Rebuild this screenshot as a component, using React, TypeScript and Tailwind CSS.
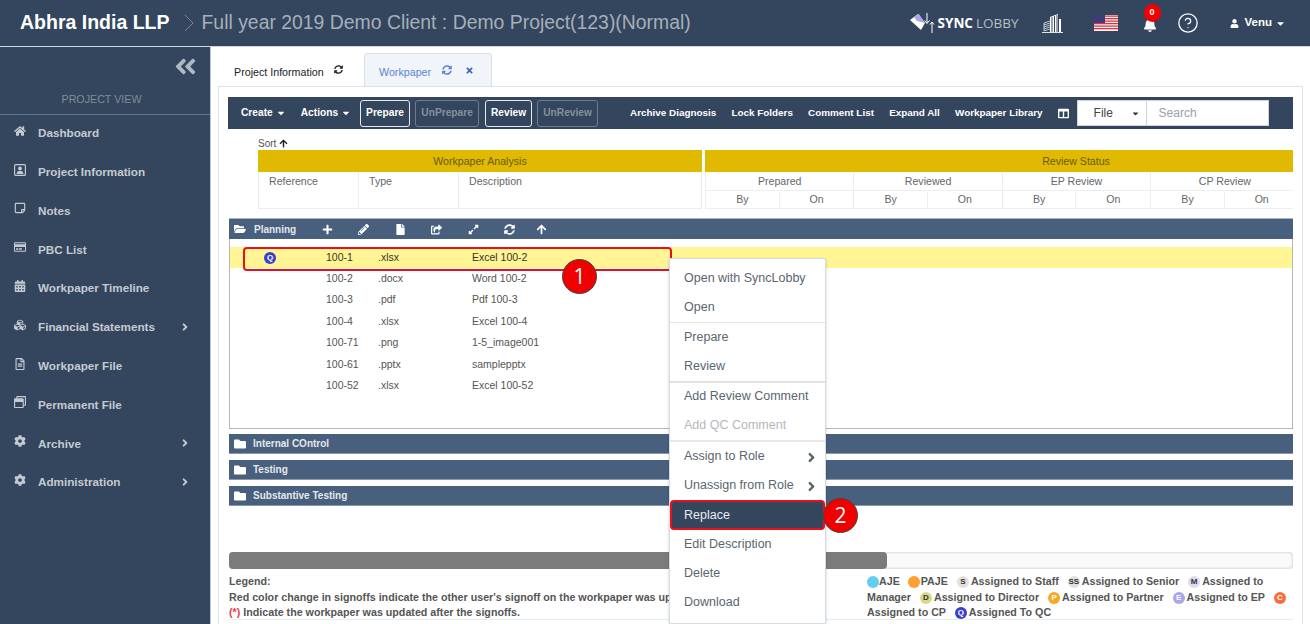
import React from 'react';
import {
    FaHome, FaRegStickyNote, FaRegCreditCard, FaCalendarAlt, FaCubes, FaRegFileAlt, FaRegWindowRestore, FaCog,
    FaAngleRight, FaAngleDoubleLeft, FaBell, FaUser, FaSyncAlt, FaTimes, FaCaretDown, FaColumns,
    FaArrowUp, FaFolderOpen, FaFolder, FaPlus, FaPencilAlt, FaFile, FaShareSquare, FaExpandAlt,
} from 'react-icons/fa';
import { CircleHelp } from 'lucide-react';

const PortraitIcon: React.FC<{ className?: string }> = ({ className }) => (
    <svg className={className} viewBox="0 0 12 12">
        <rect x="0.6" y="0.6" width="10.8" height="10.8" rx="1" fill="none" stroke="currentColor" strokeWidth="1.2" />
        <circle cx="6" cy="4.4" r="1.9" fill="currentColor" />
        <path d="M2.6 10c0-2.4 1.4-3.2 3.4-3.2s3.4.8 3.4 3.2z" fill="currentColor" />
    </svg>
);

const navItems = [
    { label: 'Dashboard', icon: FaHome },
    { label: 'Project Information', icon: PortraitIcon },
    { label: 'Notes', icon: FaRegStickyNote },
    { label: 'PBC List', icon: FaRegCreditCard },
    { label: 'Workpaper Timeline', icon: FaCalendarAlt },
    { label: 'Financial Statements', icon: FaCubes, more: true },
    { label: 'Workpaper File', icon: FaRegFileAlt },
    { label: 'Permanent File', icon: FaRegWindowRestore },
    { label: 'Archive', icon: FaCog, more: true },
    { label: 'Administration', icon: FaCog, more: true },
];

const rows = [
    ['100-1', '.xlsx', 'Excel 100-2'],
    ['100-2', '.docx', 'Word 100-2'],
    ['100-3', '.pdf', 'Pdf 100-3'],
    ['100-4', '.xlsx', 'Excel 100-4'],
    ['100-71', '.png', '1-5_image001'],
    ['100-61', '.pptx', 'samplepptx'],
    ['100-52', '.xlsx', 'Excel 100-52'],
];

const toolLinks = ['Archive Diagnosis', 'Lock Folders', 'Comment List', 'Expand All', 'Workpaper Library'];
const reviews = ['Prepared', 'Reviewed', 'EP Review', 'CP Review'];
const folderIcons = [FaPlus, FaPencilAlt, FaFile, FaShareSquare, FaExpandAlt, FaSyncAlt];

const MenuItem: React.FC<{ label: string; disabled?: boolean; more?: boolean; tall?: boolean }> = ({ label, disabled, more, tall }) => (
    <div className={`${tall ? 'h-[30px]' : 'h-[29px]'} pl-[14px] pr-[6px] flex items-center justify-between text-[12.5px] ${disabled ? 'text-[#b4b8bd]' : 'text-[#5b6570]'}`}>
        <span>{label}</span>
        {more && <FaAngleRight className="text-[15px] mt-[2px]" />}
    </div>
);

const Badge: React.FC<{ children?: React.ReactNode; className: string }> = ({ children, className }) => (
    <span className={`inline-flex w-[12px] h-[12px] rounded-full items-center justify-center text-[8px] leading-none font-bold ${className}`}>{children}</span>
);

const Legend: React.FC<{ badge: React.ReactNode; text: string }> = ({ badge, text }) => (
    <>
        <span className="inline-block w-[6px]" />
        <span className="inline-flex align-top mt-[2px] mr-[2px]">{badge}</span>
        <span>{text}</span>{' '}
    </>
);

const Callout: React.FC<{ children: React.ReactNode; className: string }> = ({ children, className }) => (
    <div className={`absolute w-[35px] h-[35px] rounded-full bg-[#f00000] border-[1.5px] border-[#444] text-white text-[21px] flex items-center justify-center font-['Open_Sans',sans-serif] ${className}`}>
        {children}
    </div>
);

const FolderBar: React.FC<{ label: string }> = ({ label }) => (
    <div className="h-[20px] ml-[1px] mb-[6px] bg-[#48607d] border-b border-[#8b9aab] flex items-center pl-[5px] gap-[7px] text-[#e4e8ec] text-[10px] font-bold">
        <FaFolder className="text-[12px] text-white" />
        {label}
    </div>
);

const App: React.FC = () => {
    return (
        <div className="w-[1310px] h-[624px] overflow-hidden flex flex-col bg-white font-['Liberation_Sans',Arial,sans-serif]">
            <header className="h-[47px] shrink-0 bg-[#34465d] border-b border-[#cfd8e2] flex items-center pl-[20px] pr-[24px]">
                <span className="text-white text-[19.5px] font-bold">Abhra India LLP</span>
                <svg className="ml-[14px] mr-[8px]" width="10" height="18" viewBox="0 0 10 18"><path d="M1 1l8 8-8 8" fill="none" stroke="#77869a" strokeWidth="1" /></svg>
                <span className="text-[#a6afba] text-[19.4px]">Full year 2019 Demo Client : Demo Project(123)(Normal)</span>
                <div className="ml-auto flex items-center">
                    <svg width="26" height="21" viewBox="0 0 26 21">
                        <path d="M0 7l8-6 7 9-4 7z" fill="#fff" />
                        <path d="M4 4l5-3 6 9-8-2z" fill="#a9a6ea" />
                        <path d="M17 0v10M14.5 7.5L17 10.5l2.5-3M22 20V9M20 11.5L22 9l2 2.5" fill="none" stroke="#fff" strokeWidth="1" />
                    </svg>
                    <span className="ml-[2px] text-white text-[13.5px] font-bold font-['Open_Sans',sans-serif]">SYNC</span>
                    <span className="ml-[3px] text-[#b6bec8] text-[13.5px] font-['Open_Sans',sans-serif]">LOBBY</span>
                    <svg className="ml-[22px]" width="23" height="19" viewBox="0 0 23 19">
                        <path d="M1 18.5h21" stroke="#dfe3e8" strokeWidth="1" />
                        <path d="M3 17V9l6-2M3 11l6-2M3 13l6-2M3 15l6-2M3 17l6-2" fill="none" stroke="#dfe3e8" strokeWidth="0.8" />
                        <path d="M9 18V3l8-3v18z" fill="#fff" />
                        <path d="M11 18V3M13.5 18V2M16 18V1" stroke="#34465d" strokeWidth="1" />
                        <path d="M18 18V5h2v13z" fill="#fff" />
                    </svg>
                    <svg className="ml-[30px]" width="24" height="16" viewBox="0 0 24 16">
                        <rect width="24" height="16" fill="#f3f3f3" />
                        <path d="M0 1.2h24M0 3.7h24M0 6.2h24M0 8.7h24M0 11.2h24M0 13.7h24" stroke="#d9323f" strokeWidth="1.3" />
                        <rect width="11" height="8" fill="#3c3b7c" />
                    </svg>
                    <div className="relative ml-[25px]">
                        <FaBell className="text-white text-[14px] mt-[3px]" />
                        <span className="absolute left-[1px] -top-[11px] w-[17px] h-[18px] rounded-full bg-[#f00000] text-white text-[9px] font-bold flex items-center justify-center">0</span>
                    </div>
                    <CircleHelp className="ml-[20px] text-white" size={22} strokeWidth={1.4} />
                    <FaUser className="ml-[31px] text-white text-[9px]" />
                    <span className="ml-[6px] text-white text-[11.5px] font-bold">Venu</span>
                    <FaCaretDown className="ml-[3px] text-white text-[11px]" />
                </div>
            </header>

            <div className="flex flex-1 min-h-0">
                <aside className="w-[211px] shrink-0 bg-[#34465d] border-r border-[#b9c8d8]">
                    <div className="h-[39px] flex items-center justify-end pr-[12px]">
                        <FaAngleDoubleLeft className="text-[#aeb7c2] text-[25px]" />
                    </div>
                    <div className="h-[29px] border-b border-[#5e7893] flex justify-center text-[#7f8c9c] text-[10.7px] pt-[5px] pr-[7px]">PROJECT VIEW</div>
                    <nav className="-mt-[1.5px]">
                        {navItems.map((item) => {
                            const Icon = item.icon;
                            return (
                                <div key={item.label} className="h-[38.8px] flex items-center pl-[14px] pr-[19px] text-[#c5cad1] text-[11.7px] font-bold">
                                    <Icon className="w-[12px] h-[12px] mb-[4px] shrink-0" />
                                    <span className="ml-[12px]">{item.label}</span>
                                    {item.more && <FaAngleRight className="ml-auto text-[12px]" />}
                                </div>
                            );
                        })}
                    </nav>
                </aside>

                <main className="flex-1 min-w-0 pl-[7px] pr-[7px] pt-[6px] flex flex-col">
                    <div className="h-[33px] shrink-0 flex text-[10.7px]">
                        <div className="w-[146px] pl-[16px] pt-[11px] flex text-[#222]">
                            Project Information
                            <FaSyncAlt className="ml-[10px] mt-[1px] text-[9px]" />
                        </div>
                        <div className="w-[128px] h-[33px] bg-[#f1f4f8] border border-b-0 border-[#d8dfe6] rounded-t-[4px] pl-[14px] pt-[10px] flex text-[#5b84d8]">
                            Workpaper
                            <FaSyncAlt className="ml-[11px] mt-[1px] text-[10px]" />
                            <FaTimes className="ml-[13px] mt-[2px] text-[9px] text-[#3b66c4]" />
                        </div>
                    </div>

                    <div className="relative flex-1 min-h-0 border border-[#dbe3ea] border-b-0 pl-[9px] pr-[9px] pt-[10px]">
                        <div className="h-[32px] bg-[#34465d] flex items-center pl-[13px] text-white text-[10.2px] font-bold">
                            <span>Create</span>
                            <FaCaretDown className="ml-[3px] text-[10px]" />
                            <span className="ml-[15px]">Actions</span>
                            <FaCaretDown className="ml-[3px] text-[10px]" />
                            <span className="ml-[9px] h-[27px] w-[50px] border border-[#e6e9ed] rounded-[3px] flex items-center justify-center">Prepare</span>
                            <span className="ml-[5px] h-[27px] w-[64px] border border-[#6d7c8e] rounded-[3px] flex items-center justify-center text-[#84909f]">UnPrepare</span>
                            <span className="ml-[6px] h-[27px] w-[47px] border border-[#e6e9ed] rounded-[3px] flex items-center justify-center">Review</span>
                            <span className="ml-[5px] h-[27px] w-[61px] border border-[#6d7c8e] rounded-[3px] flex items-center justify-center text-[#84909f]">UnReview</span>
                            <div className="ml-[32px] flex items-center gap-[15.2px] text-[9.9px]">
                                {toolLinks.map((link) => <span key={link}>{link}</span>)}
                            </div>
                            <FaColumns className="ml-[15px] text-[11px]" />
                            <div className="ml-[8px] h-[26px] w-[70px] bg-white flex items-center justify-between pl-[16px] pr-[6px] text-[#444] text-[12px] font-normal border border-[#cdd6df]">
                                File
                                <FaCaretDown className="text-[9px] text-[#333]" />
                            </div>
                            <div className="h-[26px] w-[122px] bg-white flex items-center pl-[12px] text-[#9aa1a9] text-[12px] font-normal border border-l-0 border-[#cdd6df]">Search</div>
                        </div>

                        <div className="h-[90px] overflow-hidden -mb-[1px]">
                            <div className="w-[1500px] pl-[30px]">
                                <div className="h-[21px] pt-[7px] flex items-center text-[10px] text-[#555]">
                                    Sort
                                    <FaArrowUp className="ml-[3px] text-[9px] text-[#222]" />
                                </div>
                                <div className="flex gap-[3px] text-[10.6px] text-[#666]">
                                    <div className="w-[444px] border-b border-[#eee]">
                                        <div className="h-[22px] pt-[1px] bg-[#e0b900] text-[#665a1a] flex items-center justify-center">Workpaper Analysis</div>
                                        <div className="h-[36px] flex border-x border-[#eee]">
                                            <div className="w-[100px] pl-[10px] pt-[2px] border-r border-[#eee]">Reference</div>
                                            <div className="w-[100px] pl-[10px] pt-[2px] border-r border-[#eee]">Type</div>
                                            <div className="flex-1 pl-[10px] pt-[2px]">Description</div>
                                        </div>
                                    </div>
                                    <div className="w-[742px] border-b border-[#eee]">
                                        <div className="h-[22px] pt-[1px] bg-[#e0b900] text-[#665a1a] flex items-center justify-center">Review Status</div>
                                        <div className="flex border-l border-[#eee]">
                                            {reviews.map((name) => (
                                                <div key={name} className="w-[148.4px] border-r border-[#eee]">
                                                    <div className="h-[19px] pt-[2px] flex items-center justify-center border-b border-[#eee]">{name}</div>
                                                    <div className="h-[17px] pt-[1px] flex">
                                                        <div className="w-1/2 flex items-center justify-center border-r border-[#eee]">By</div>
                                                        <div className="w-1/2 flex items-center justify-center">On</div>
                                                    </div>
                                                </div>
                                            ))}
                                        </div>
                                    </div>
                                </div>
                            </div>
                        </div>

                        <div className="h-[21px] ml-[1px] bg-[#48607d] border-t border-[#aab3bc] flex items-center pl-[5px] text-white">
                            <FaFolderOpen className="text-[12px]" />
                            <span className="ml-[8px] text-[10px] font-bold text-[#e4e8ec] w-[68px]">Planning</span>
                            <div className="flex items-center text-[11px]">
                                {folderIcons.map((Icon, i) => (
                                    <span key={i} className="w-[36.4px]"><Icon /></span>
                                ))}
                                <FaArrowUp className="-ml-[4px]" />
                            </div>
                        </div>
                        <div className="h-[190px] ml-[1px] mb-[5px] border border-t-0 border-[#b5b5b5] pt-[8px] text-[10.5px] text-[#555]">
                            {rows.map((row, i) => (
                                <div key={row[0]} className={`h-[21.35px] flex items-center ${i === 0 ? 'bg-[#fff594] text-[#333]' : ''}`}>
                                    <span className="w-[96px] shrink-0 pl-[34px] flex items-center">
                                        {i === 0 && <Badge className="bg-[#3a3fd0] text-white">Q</Badge>}
                                    </span>
                                    <span className="w-[52px] shrink-0">{row[0]}</span>
                                    <span className="w-[94px] shrink-0">{row[1]}</span>
                                    <span>{row[2]}</span>
                                </div>
                            ))}
                        </div>
                        <FolderBar label="Internal COntrol" />
                        <FolderBar label="Testing" />
                        <FolderBar label="Substantive Testing" />

                        <div className="ml-[1px] mt-[46px] h-[17px] bg-[#fafafa] rounded-[4px] shadow-[inset_0_0_3px_#bbb]">
                            <div className="w-[658px] h-full bg-[#7b7b7b] rounded-[4px]" />
                        </div>

                        <div className="ml-[1px] mt-[5px] h-[46px] flex text-[10.7px] font-bold text-[#555] leading-[15.5px] border-b border-[#e4edf2]">
                            <div className="w-[638px] shrink-0 whitespace-nowrap overflow-hidden">
                                <div>Legend:</div>
                                <div>Red color change in signoffs indicate the other user's signoff on the workpaper was updated.</div>
                                <div><span className="text-[#e8404a]">(*)</span> Indicate the workpaper was updated after the signoffs.</div>
                            </div>
                            <div className="flex-1">
                                <span className="inline-flex align-top mt-[2px]"><Badge className="bg-[#62cff0]" /></span>
                                <span>AJE</span>{' '}
                                <span className="inline-block w-[5px]" />
                                <span className="inline-flex align-top mt-[2px] mr-[1px]"><Badge className="bg-[#ff9f33]" /></span>
                                <span>PAJE</span>{' '}
                                <Legend badge={<Badge className="bg-[#e0e0e0] text-[#333]">S</Badge>} text="Assigned to Staff" />
                                <Legend badge={<Badge className="bg-[#e0e0e0] text-[#333]">SS</Badge>} text="Assigned to Senior" />
                                <Legend badge={<Badge className="bg-[#dfdcf0] text-[#333]">M</Badge>} text="Assigned to Manager" />
                                <Legend badge={<Badge className="bg-[#d7d88a] text-[#333]">D</Badge>} text="Assigned to Director" />
                                <Legend badge={<Badge className="bg-[#f9a825] text-white">P</Badge>} text="Assigned to Partner" />
                                <Legend badge={<Badge className="bg-[#a9a6ea] text-white">E</Badge>} text="Assigned to EP" />
                                <Legend badge={<Badge className="bg-[#ff6a3d] text-white">C</Badge>} text="Assigned to CP" />
                                <Legend badge={<Badge className="bg-[#3a3fd0] text-white">Q</Badge>} text="Assigned To QC" />
                            </div>
                        </div>

                        {/* annotations and the open context menu lie over the table */}
                        <div className="absolute left-[24px] top-[160px] w-[429px] h-[24px] border-2 border-[#e8101a] rounded-[4px]" />
                        <Callout className="left-[343px] top-[172px]">1</Callout>

                        <div className="absolute left-[450px] top-[171px] w-[157px] h-[366px] bg-white border border-[#d3dde6] shadow-[0_1px_3px_rgba(0,0,0,0.2)] rounded-[2px] pt-[5px]">
                            <MenuItem label="Open with SyncLobby" />
                            <MenuItem label="Open" />
                            <div className="border-t border-[#e6e6e6]" />
                            <MenuItem label="Prepare" />
                            <MenuItem label="Review" />
                            <div className="border-t-2 border-[#e2e2e2] -mb-[1px]" />
                            <MenuItem label="Add Review Comment" />
                            <MenuItem label="Add QC Comment" disabled />
                            <div className="border-t-2 border-[#e8e8e8] -mb-[1px]" />
                            <MenuItem label="Assign to Role" more tall />
                            <MenuItem label="Unassign from Role" more />
                            <div className="h-[30px] bg-[#34465d] border-2 border-[#e8101a] rounded-[4px] flex items-center pl-[12px] text-[12.5px] text-[#e8ebee]">Replace</div>
                            <MenuItem label="Edit Description" />
                            <MenuItem label="Delete" />
                            <MenuItem label="Download" />
                        </div>
                        <Callout className="left-[604px] top-[411px]">2</Callout>
                    </div>
                </main>
            </div>
        </div>
    );
};

export default App;
